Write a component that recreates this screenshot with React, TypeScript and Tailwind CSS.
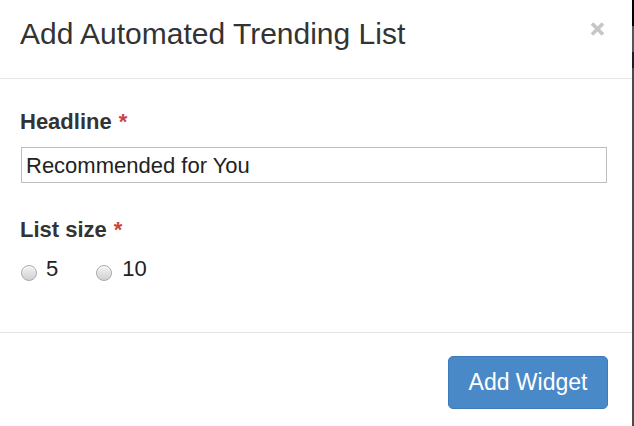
import React from "react";

function Radio() {
  return (
    <span className="mt-[8px] w-[16px] h-[16px] rounded-full border border-[#a9a9a9] bg-gradient-to-b from-[#f4f4f4] to-[#d0d0d0] shadow-[inset_0_1px_1px_rgba(255,255,255,0.8)]"></span>
  );
}

export default function App() {
  return (
    <div className="w-[634px] h-[426px] flex bg-white overflow-hidden" style={{ fontFamily: '"Liberation Sans", Arial, sans-serif' }}>
      <div className="w-[632px] h-full flex flex-col bg-white">
        <div className="h-[79px] shrink-0 flex items-start justify-between pl-[20px] pr-[26px] border-b border-[#e5e5e5]">
          <h1 className="text-[30px] leading-[34px] mt-[17px] text-[#333] font-normal">Add Automated Trending List</h1>
          <svg className="mt-[21px]" width="17" height="16" viewBox="0 0 17 16">
            <path d="M3 2.5 L14 13.5 M14 2.5 L3 13.5" stroke="#c6c6c6" strokeWidth="3.6" strokeLinecap="butt" />
          </svg>
        </div>
        <div className="h-[253px] shrink-0 flex flex-col px-[20px] pt-[31px]">
          <div className="flex items-start text-[22px] leading-[24px] font-bold text-[#333]">
            Headline<span className="text-[#c9433f] ml-[7px]">*</span>
          </div>
          <div className="mt-[13px] ml-[1px] w-[586px] h-[36px] border border-[#bdbdbd] flex items-center px-[4px] text-[22px] text-[#222]">
            Recommended for You
          </div>
          <div className="mt-[35px] flex items-start text-[22px] leading-[24px] font-bold text-[#333]">
            List size<span className="text-[#c9433f] ml-[7px]">*</span>
          </div>
          <div className="mt-[15px] pl-[1px] flex items-start text-[22px] leading-[24px] text-[#222]">
            <Radio />
            <span className="ml-[9px]">5</span>
            <span className="ml-[38px] flex"><Radio /></span>
            <span className="ml-[10px]">10</span>
          </div>
        </div>
        <div className="flex-1 border-t border-[#e5e5e5] flex justify-end items-start pr-[24px] pt-[23px]">
          <button className="w-[160px] h-[53px] rounded-[5px] bg-[#4a89c8] border border-[#3c7aba] text-white text-[23px]">Add Widget</button>
        </div>
      </div>
      <div className="w-[2px] h-full flex flex-col bg-[#4b4b4b]">
        <div className="h-[26px] bg-black"></div>
        <div className="h-[26px] bg-[#555]"></div>
        <div className="h-[16px] bg-[#1d1d2a]"></div>
      </div>
    </div>
  );
}
